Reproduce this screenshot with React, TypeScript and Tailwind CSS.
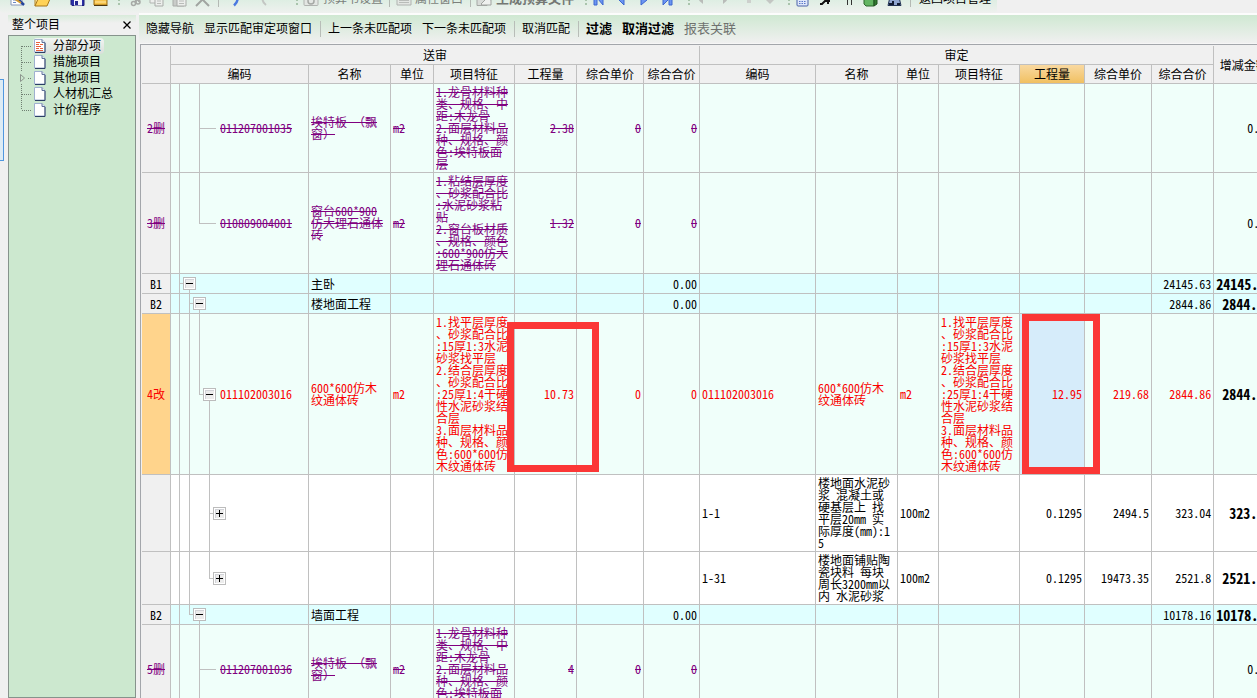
import React from "react";

type Tone = "deleted" | "changed" | "normal";
type Tree = {
  full: number[];
  half?: number;
  stub?: number;
  box?: { at: number; sign: "-" | "+" };
};
type Side = {
  code?: string;
  name?: string[];
  unit?: string;
  feature?: string[];
  qty?: string;
  price?: string;
  total?: string;
};
type Row = {
  mark: string;
  tone: Tone;
  bg: string;
  tree: Tree;
  sent: Side;
  approved: Side;
  diff?: string;
  diffBold?: boolean;
  selected?: boolean;
};

const MINT = "bg-[#f0fffa]";
const CYAN = "bg-[#e0ffff]";

const tones: Record<Tone, string> = {
  deleted: "text-[#800080] line-through",
  changed: "text-[#fa0000]",
  normal: "text-black",
};

const guideX: Record<number, string> = {
  0: "left-[8px]",
  1: "left-[18px]",
  2: "left-[28px]",
  3: "left-[38px]",
  4: "left-[48px]",
};
const boxX: Record<number, string> = {
  1: "left-[12px]",
  2: "left-[22px]",
  3: "left-[32px]",
  4: "left-[42px]",
};

const panelFeature = [
  "1.龙骨材料种",
  "类、规格、中",
  "距:木龙骨",
  "2.面层材料品",
  "种、规格、颜",
  "色:埃特板面",
  "层",
];
const floorFeature = [
  "1.找平层厚度",
  "、砂浆配合比",
  ":15厚1:3水泥",
  "砂浆找平层",
  "2.结合层厚度",
  "、砂浆配合比",
  ":25厚1:4干硬",
  "性水泥砂浆结",
  "合层",
  "3.面层材料品",
  "种、规格、颜",
  "色:600*600仿",
  "木纹通体砖",
];

const rows: Row[] = [
  {
    mark: "2删", tone: "deleted", bg: MINT, tree: { full: [0, 2], stub: 2 },
    sent: { code: "011207001035", name: ["埃特板 （飘", "窗）"], unit: "m2", feature: panelFeature, qty: "2.38", price: "0", total: "0" },
    approved: {}, diff: "0.00",
  },
  {
    mark: "3删", tone: "deleted", bg: MINT, tree: { full: [0], half: 2, stub: 2 },
    sent: {
      code: "010809004001", name: ["窗台600*900", "仿大理石通体", "砖"], unit: "m2",
      feature: ["1.粘结层厚度", "、砂浆配合比", ":水泥砂浆粘", "贴", "2.窗台板材质", "、规格、颜色", ":600*900仿大", "理石通体砖"],
      qty: "1.32", price: "0", total: "0",
    },
    approved: {}, diff: "0.00",
  },
  {
    mark: "B1", tone: "normal", bg: CYAN, tree: { full: [0], box: { at: 1, sign: "-" } },
    sent: { name: ["主卧"], total: "0.00" }, approved: { total: "24145.63" }, diff: "24145.63", diffBold: true,
  },
  {
    mark: "B2", tone: "normal", bg: CYAN, tree: { full: [0, 1], box: { at: 2, sign: "-" } },
    sent: { name: ["楼地面工程"], total: "0.00" }, approved: { total: "2844.86" }, diff: "2844.86", diffBold: true,
  },
  {
    mark: "4改", tone: "changed", bg: MINT, selected: true, tree: { full: [0, 1], half: 2, box: { at: 3, sign: "-" } },
    sent: { code: "011102003016", name: ["600*600仿木", "纹通体砖"], unit: "m2", feature: floorFeature, qty: "10.73", price: "0", total: "0" },
    approved: { code: "011102003016", name: ["600*600仿木", "纹通体砖"], unit: "m2", feature: floorFeature, qty: "12.95", price: "219.68", total: "2844.86" },
    diff: "2844.86", diffBold: true,
  },
  {
    mark: "", tone: "normal", bg: "bg-white", tree: { full: [0, 1, 3], box: { at: 4, sign: "+" } },
    sent: {},
    approved: {
      code: "1-1", name: ["楼地面水泥砂", "浆 混凝土或", "硬基层上 找", "平层20mm 实", "际厚度(mm):1", "5"],
      unit: "100m2", qty: "0.1295", price: "2494.5", total: "323.04",
    },
    diff: "323.04", diffBold: true,
  },
  {
    mark: "", tone: "normal", bg: "bg-white", tree: { full: [0, 1], half: 3, box: { at: 4, sign: "+" } },
    sent: {},
    approved: {
      code: "1-31", name: ["楼地面铺贴陶", "瓷块料 每块", "周长3200mm以", "内 水泥砂浆"],
      unit: "100m2", qty: "0.1295", price: "19473.35", total: "2521.8",
    },
    diff: "2521.80", diffBold: true,
  },
  {
    mark: "B2", tone: "normal", bg: CYAN, tree: { full: [0], half: 1, box: { at: 2, sign: "-" } },
    sent: { name: ["墙面工程"], total: "0.00" }, approved: { total: "10178.16" }, diff: "10178.16", diffBold: true,
  },
  {
    mark: "5删", tone: "deleted", bg: MINT, tree: { full: [0, 2], stub: 2 },
    sent: { code: "011207001036", name: ["埃特板 （飘", "窗）"], unit: "m2", feature: panelFeature, qty: "4", price: "0", total: "0" },
    approved: {}, diff: "0.00",
  },
];

const cell = "border-r border-b border-[#c0c0c0] px-[2px] py-[2px] align-middle whitespace-nowrap";

function Lines({ items }: { items?: string[] }) {
  return (
    <>
      {items?.map((line, i) => (
        <div key={i}>{line}</div>
      ))}
    </>
  );
}

function TreeGuides({ tree }: { tree: Tree }) {
  const parent = tree.box ? tree.box.at - 1 : 0;
  return (
    <>
      {tree.full.map((g) => (
        <span key={g} className={`absolute inset-y-0 w-px bg-[#c0c0c0] ${guideX[g]}`} />
      ))}
      {tree.half !== undefined && (
        <span className={`absolute top-0 bottom-1/2 w-px bg-[#c0c0c0] ${guideX[tree.half]}`} />
      )}
      {tree.stub !== undefined && (
        <span className={`absolute top-1/2 h-px w-[17px] bg-[#c0c0c0] ${guideX[tree.stub]}`} />
      )}
      {tree.box && (
        <>
          <span className={`absolute inset-y-0 my-auto h-px w-[6px] bg-[#c0c0c0] ${guideX[parent]}`} />
          {tree.box.sign === "-" && (
            <span className={`absolute top-1/2 bottom-0 w-px bg-[#c0c0c0] ${guideX[tree.box.at]}`} />
          )}
          <button
            type="button"
            aria-label={tree.box.sign === "-" ? "折叠" : "展开"}
            className={`absolute inset-y-0 my-auto flex size-[13px] items-center justify-center border border-[#bcbcbc] bg-white ${boxX[tree.box.at]}`}
          >
            <svg viewBox="0 0 11 11" className="size-[11px] shrink-0" shapeRendering="crispEdges">
              <rect x="1" y="1" width="9" height="9" fill="#d2d3d8" />
              <rect x="2" y="2" width="8" height="8" fill="#ececec" />
              <rect x="2" y="5" width="7" height="1" fill="#000" />
              {tree.box.sign === "+" && <rect x="5" y="2" width="1" height="7" fill="#000" />}
            </svg>
          </button>
        </>
      )}
    </>
  );
}

function DataRow({ row }: { row: Row }) {
  const t = tones[row.tone];
  const s = row.sent;
  const a = row.approved;
  return (
    <tr className={`h-5 ${row.bg}`}>
      <th
        scope="row"
        className={`${cell} text-center font-normal ${row.selected ? "bg-[#ffd48c]" : "bg-[#f0f0f0]"} ${t}`}
      >
        {row.mark}
      </th>
      <td className={`${cell} relative`}>
        <TreeGuides tree={row.tree} />
        <div className={`pl-[47px] ${t}`}>{s.code}</div>
      </td>
      <td className={`${cell} ${t}`}><Lines items={s.name} /></td>
      <td className={`${cell} ${t}`}>{s.unit}</td>
      <td className={`${cell} ${t}`}><Lines items={s.feature} /></td>
      <td className={`${cell} relative text-right ${t}`}>
        {s.qty}
        {row.selected && (
          <span className="pointer-events-none absolute top-[8px] -left-[8px] z-10 h-[150px] w-[92px] border-7 border-[#fb3736]" />
        )}
      </td>
      <td className={`${cell} text-right ${t}`}>{s.price}</td>
      <td className={`${cell} text-right ${t}`}>{s.total}</td>
      <td className={`${cell} ${t}`}>{a.code}</td>
      <td className={`${cell} ${t}`}><Lines items={a.name} /></td>
      <td className={`${cell} ${t}`}>{a.unit}</td>
      <td className={`${cell} ${t}`}><Lines items={a.feature} /></td>
      <td className={`${cell} relative text-right ${t} ${row.selected ? "bg-[#d6ecfa]" : ""}`}>
        {a.qty}
        {row.selected && (
          <span className="pointer-events-none absolute top-0 left-[2px] z-10 h-[160px] w-[78px] border-7 border-[#fb3736]" />
        )}
      </td>
      <td className={`${cell} text-right ${t}`}>{a.price}</td>
      <td className={`${cell} text-right ${t}`}>{a.total}</td>
      <td className={`${cell} text-right text-black ${row.diffBold ? "text-[14px] leading-3 font-bold" : ""}`}>{row.diff}</td>
    </tr>
  );
}

const columns = ["编码", "名称", "单位", "项目特征", "工程量", "综合单价", "综合合价"];

function Grid() {
  const head = "border-r border-b border-[#c0c0c0] p-0 text-center font-normal whitespace-nowrap";
  return (
    <table className="w-[1131px] table-fixed border-separate border-spacing-0 font-['Noto_Sans_Mono_CJK_SC','Liberation_Sans','Noto_Sans_CJK_SC',sans-serif] text-xs leading-3 text-black">
      <colgroup>
        <col className="w-[29px]" />
        <col className="w-[138px]" />
        <col className="w-[82px]" />
        <col className="w-[43px]" />
        <col className="w-[81px]" />
        <col className="w-[62px]" />
        <col className="w-[67px]" />
        <col className="w-[56px]" />
        <col className="w-[116px]" />
        <col className="w-[82px]" />
        <col className="w-[41px]" />
        <col className="w-[81px]" />
        <col className="w-[65px]" />
        <col className="w-[67px]" />
        <col className="w-[62px]" />
        <col className="w-[60px]" />
      </colgroup>
      <thead className="bg-[#f0f0f0]">
        <tr className="h-[19px]">
          <th rowSpan={2} aria-label="序号" className={head} />
          <th colSpan={7} className={head}>送审</th>
          <th colSpan={7} className={head}>审定</th>
          <th rowSpan={2} className={head}>增减金额</th>
        </tr>
        <tr className="h-[19px]">
          {columns.map((c) => (
            <th key={c} className={head}>{c}</th>
          ))}
          {columns.map((c) => (
            <th key={c} className={`${head} ${c === "工程量" ? "bg-linear-to-b from-[#f9d9a0] to-[#f1c060]" : ""}`}>{c}</th>
          ))}
        </tr>
      </thead>
      <tbody>
        {rows.map((r, i) => (
          <DataRow key={i} row={r} />
        ))}
      </tbody>
    </table>
  );
}

function Tool({ label, className, children }: { label: string; className: string; children: React.ReactNode }) {
  return (
    <button type="button" aria-label={label} className={`flex h-4 shrink-0 items-end ${className}`}>
      <svg viewBox="0 0 16 16" className="size-4 shrink-0" fill="none">{children}</svg>
    </button>
  );
}

function Grip({ className }: { className: string }) {
  return (
    <span className={`flex h-4 shrink-0 flex-col justify-end gap-[2px] pb-[2px] ${className}`}>
      <i className="size-[2px] bg-[#a9c4ac]" />
      <i className="size-[2px] bg-[#a9c4ac]" />
      <i className="size-[2px] bg-[#a9c4ac]" />
    </span>
  );
}

function Bar({ className }: { className: string }) {
  return <span className={`h-4 w-px shrink-0 bg-[#b4b9b4] ${className}`} />;
}

function TopBar() {
  return (
    <header className="flex h-[13px] shrink-0 overflow-hidden bg-[#f0f0f0]">
      <div className="flex items-end rounded-b bg-linear-to-b from-[#deeee3] to-[#eff1ef] pr-[6px] pb-[6px] pl-[10px] text-xs leading-4 whitespace-nowrap">
        <Tool label="新建" className="w-[24px]">
          <path d="M1 2h11v12H1z" fill="#fff" stroke="#8796b8" />
          <path d="M3 9h4M3 11.500h3" stroke="#6d88c4" />
          <path d="M7 7l7 7" stroke="#24449b" strokeWidth="2.500" />
          <path d="M5 8l6 4" stroke="#d39b32" strokeWidth="2" />
        </Tool>
        <Tool label="打开" className="w-[36px]">
          <path d="M1 15V4h6l1 2h6v3" fill="#ffe9a0" stroke="#b08222" />
          <path d="M1 15l3-7h12l-3 7z" fill="#ffd257" stroke="#a7771a" />
        </Tool>
        <Tool label="保存" className="w-[23px]">
          <path d="M1 1h13v13.500H2L1 13.500z" fill="#2a2fa8" stroke="#1b1e78" />
          <path d="M4 9h8v5.500H4z" fill="#f2f3fb" />
          <path d="M5 10h3v4H5z" fill="#23278f" />
        </Tool>
        <Tool label="目录" className="w-[25px]">
          <path d="M1 5h13v9H1z" fill="#f6c34a" stroke="#9b6a10" />
          <path d="M2 11h11" stroke="#ffe6a1" />
          <path d="M1 14.500h13.500" stroke="#4b3610" />
        </Tool>
        <Grip className="w-[11px]" />
        <Tool label="剪切" className="w-[20px]">
          <path d="M10 1L6 11M5 1l5 10" stroke="#a6a9a6" strokeWidth="1.500" />
          <circle cx="4.500" cy="12.500" r="2" stroke="#a6a9a6" strokeWidth="1.500" />
          <circle cx="9" cy="11" r="2" stroke="#a6a9a6" strokeWidth="1.500" />
        </Tool>
        <Tool label="复制" className="w-[23px]">
          <path d="M1 1h8v11H1z" fill="#eceeec" stroke="#b2b5b2" />
          <path d="M6 5h8v10H6z" fill="#eceeec" stroke="#a9aca9" />
          <path d="M8 10h4M8 12.500h4" stroke="#b9bcb9" />
        </Tool>
        <Tool label="粘贴" className="w-[23px]">
          <path d="M1 2h11v13H1z" fill="#c9ccc9" stroke="#a9aca9" />
          <path d="M5 6h9v9H5z" fill="#eceeec" stroke="#a9aca9" />
          <path d="M7 10h5M7 12.500h5" stroke="#b9bcb9" />
        </Tool>
        <Tool label="删除" className="w-[23px]">
          <path d="M2 3l12 12M13 3L1 15" stroke="#a1a4a1" strokeWidth="2" />
        </Tool>
        <Bar className="mr-[11px]" />
        <Tool label="撤销" className="w-[28px]">
          <path d="M5 4c4 2 3 7-1 10.500" stroke="#4a78e0" strokeWidth="2.500" />
        </Tool>
        <Tool label="重做" className="w-[38px]">
          <path d="M7 4c-4 2-3 7 1 10" stroke="#c3c6c3" strokeWidth="2" />
        </Tool>
        <Grip className="w-[7px]" />
        <button type="button" className="flex h-4 shrink-0 items-end gap-1 text-[#7c7f7c]">
          <svg viewBox="0 0 16 16" className="size-4" fill="none">
            <rect x="1" y="3" width="14" height="11.500" rx="1" fill="#e3e6e3" stroke="#b0b3b0" />
            <circle cx="8" cy="10" r="3" stroke="#a5a8a5" strokeWidth="1.500" />
          </svg>
          预算书设置
        </button>
        <Bar className="mr-[6px] ml-[6px]" />
        <button type="button" className="flex h-4 shrink-0 items-end gap-[3px] text-[#7c7f7c]">
          <svg viewBox="0 0 16 16" className="size-4" fill="none">
            <path d="M1 3h14v11H1z" fill="#e3e6e3" stroke="#b0b3b0" />
            <path d="M3 9.500h10M3 11.500h10" stroke="#b9bcb9" />
          </svg>
          属性窗口
        </button>
        <Bar className="mr-[5px] ml-[7px]" />
        <button type="button" className="flex h-4 shrink-0 items-end gap-1 text-[13px] leading-4 font-bold text-[#747774]">
          <svg viewBox="0 0 16 16" className="size-4" fill="none">
            <path d="M1 4h10v10.500H1z" fill="#d8dbd8" stroke="#a5a8a5" />
            <path d="M5 13l6-6 4 2v5H6z" fill="#eef0ee" stroke="#a0a3a0" />
          </svg>
          生成预算文件
        </button>
        <Grip className="ml-[11px] w-[8px]" />
        <Tool label="首条" className="w-[24px]">
          <path d="M1 4h3v10H1zM10 4v10L5 8z" fill="#6b95f2" stroke="#3c66cf" />
        </Tool>
        <Tool label="上一条" className="w-[23px]">
          <path d="M7 4v10L2 9z" fill="#6b95f2" stroke="#3c66cf" />
        </Tool>
        <Tool label="下一条" className="w-[22px]">
          <path d="M1 4v10l6-5z" fill="#6b95f2" stroke="#3c66cf" />
        </Tool>
        <Tool label="末条" className="w-[26px]">
          <path d="M7 4h3v10H7zM1 4v10l6-6z" fill="#6b95f2" stroke="#3c66cf" />
        </Tool>
        <Grip className="w-[9px]" />
        <Tool label="升级" className="w-[24px]"><path d="M6 6v7L2 9.500z" fill="#b9bcb9" /></Tool>
        <Tool label="降级" className="w-[22px]"><path d="M2 6v7l4-3.500z" fill="#b9bcb9" /></Tool>
        <Tool label="上移" className="w-[22px]"><path d="M2 8l3-4 3 4v4H4V8z" fill="#cdd0cd" /></Tool>
        <Tool label="下移" className="w-[23px]"><path d="M1 9h8l-4 4z" fill="#c3c6c3" /></Tool>
        <Grip className="w-[8px]" />
        <Tool label="计算器" className="w-[23px]">
          <rect x="1" y="2" width="11" height="13" rx="1" fill="#dfe7fa" stroke="#4b62a8" />
          <path d="M3 10.500h7M3 12.500h7" stroke="#5876c8" strokeDasharray="1.500 1" />
        </Tool>
        <Tool label="查找" className="w-[25px]">
          <path d="M1 13h2l3-3h5M9 8v5" stroke="#111" strokeWidth="2" />
        </Tool>
        <Tool label="列设置" className="w-[19px]">
          <path d="M3.500 3v11M7.500 3v11" stroke="#333" />
        </Tool>
        <Tool label="图集" className="w-[24px]">
          <path d="M1 5h10v10H3l-2-2z" fill="#62b562" stroke="#2c662c" />
          <path d="M11 5l3-2v10l-3 2z" fill="#2f7a2f" stroke="#1f4f1f" />
        </Tool>
        <Tool label="打印" className="w-[23px]">
          <path d="M3 6h9l2 8.500H1z" fill="#8fa5cf" stroke="#233354" />
          <path d="M2 13h3M10 13h3M6 10v4" stroke="#111b33" strokeWidth="2" />
        </Tool>
        <Bar className="mr-[8px]" />
        <button type="button" className="h-4 shrink-0 text-black">返回项目管理</button>
      </div>
    </header>
  );
}

function ActionBar() {
  const sep = "mr-[2px] ml-[3px] h-4 w-px shrink-0 bg-[#b8bdb8]";
  const btn = "shrink-0 px-[5px]";
  return (
    <div className="flex h-[29px] shrink-0 items-center border-b border-[#f6f6f6] bg-linear-to-b from-[#cfe8d2] to-[#f0f0f0] pl-[2px] text-xs leading-4 whitespace-nowrap text-black">
      <button type="button" className={btn}>隐藏导航</button>
      <button type="button" className={btn}>显示匹配审定项窗口</button>
      <span className={sep} />
      <button type="button" className={btn}>上一条未匹配项</button>
      <button type="button" className={btn}>下一条未匹配项</button>
      <span className={sep} />
      <button type="button" className={btn}>取消匹配</button>
      <span className={sep} />
      <button type="button" className={`${btn} text-[13px] font-bold`}>过滤</button>
      <button type="button" className={`${btn} text-[13px] font-bold`}>取消过滤</button>
      <button type="button" className={`${btn} text-[13px] text-[#6f726f]`}>报表关联</button>
    </div>
  );
}

function PageIcon({ marked }: { marked?: boolean }) {
  return (
    <svg viewBox="0 0 12 14" className="h-[14px] w-3 shrink-0" fill="none">
      <path d="M.5.500h7.500l3 3v9.500H.5z" fill="#fff" stroke="#9fb0d0" />
      <path d="M11 4v9.500H1" stroke="#2c3f66" />
      <path d="M8 .5v3h3" fill="#dfe6f5" stroke="#5f7198" />
      {marked && (
        <g fill="#e8603c" shapeRendering="crispEdges">
          <rect x="2" y="3" width="4" height="1" />
          <rect x="2" y="5" width="3" height="1" />
          <rect x="6" y="5" width="3" height="1" />
          <rect x="2" y="7" width="5" height="1" />
          <rect x="2" y="9" width="3" height="1" />
          <rect x="6" y="9" width="3" height="1" />
          <rect x="2" y="11" width="7" height="1" />
        </g>
      )}
    </svg>
  );
}

const navItems = ["分部分项", "措施项目", "其他项目", "人材机汇总", "计价程序"];

function NavPanel() {
  return (
    <aside className="flex w-32 shrink-0 flex-col">
      <div className="flex h-5 items-center justify-between bg-linear-to-b from-[#d8ebda] to-[#f0f0f0] to-40% pr-1 pl-1 text-xs text-black">
        <h2>整个项目</h2>
        <button type="button" aria-label="关闭" className="flex size-[10px] items-center justify-center">
          <svg viewBox="0 0 8 8" className="size-2"><path d="M.5.500l7 7M7.500.500l-7 7" stroke="#000" strokeWidth="1.300" /></svg>
        </button>
      </div>
      <ul className="grow border border-[#86938c] bg-[#cce8cf] pt-[2px] text-xs leading-4 text-black">
        {navItems.map((item, i) => (
          <li key={item} className="flex h-4 items-center pl-[10px]">
            <svg viewBox="0 0 14 16" className="h-4 w-[14px] shrink-0" fill="none" shapeRendering="crispEdges">
              <path
                d={i === 0 ? "M2.500 8v8" : i === 2 ? "M2.500 0v2M2.500 14v2" : i === 4 ? "M2.500 0v8" : "M2.500 0v16"}
                stroke="#6f7f72"
                strokeDasharray="1 1"
              />
              <path d={i === 2 ? "M9 8.500h4" : "M3 8.500h10"} stroke="#6f7f72" strokeDasharray="1 1" />
              {i === 2 && <path d="M1.500 4.500v7l4-3.500z" stroke="#8c958e" shapeRendering="auto" />}
            </svg>
            <a
              href="#"
              aria-current={i === 0 ? "page" : undefined}
              className={`flex h-4 items-center gap-[7px] rounded-sm pr-[3px] pl-[1px] whitespace-nowrap ${i === 0 ? "bg-linear-to-b from-[#f3f5f3] to-[#d9dfda]" : ""}`}
            >
              <PageIcon marked={i === 0} />
              {item}
            </a>
          </li>
        ))}
      </ul>
    </aside>
  );
}

export default function App() {
  return (
    <div className="flex h-screen flex-col overflow-hidden bg-[#f0f0f0] font-['Liberation_Sans','Noto_Sans_CJK_SC',sans-serif]">
      <TopBar />
      <div className="flex min-h-0 grow">
        <div className="w-2 shrink-0 pt-[66px]">
          <div className="h-[82px] w-1 border-y border-r border-[#4f97e0] bg-[#dcebf5]" />
        </div>
        <div className="flex shrink-0 pt-[2px]">
          <NavPanel />
        </div>
        <main className="ml-[3px] flex min-w-0 grow flex-col border-t-2 border-[#fcfcfc]">
          <ActionBar />
          <div className="ml-px min-h-0 grow overflow-hidden border-t border-l border-[#a3a6ab] pt-px pl-px">
            <Grid />
          </div>
        </main>
      </div>
    </div>
  );
}
